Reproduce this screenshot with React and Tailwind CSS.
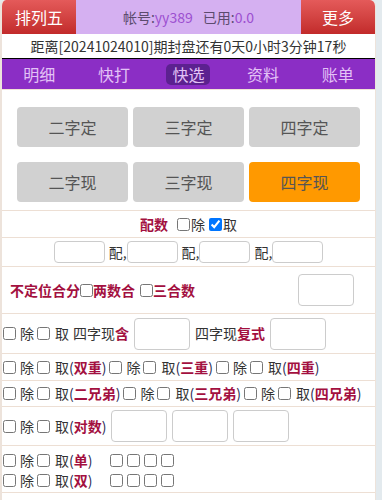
import React from "react";

const RED = "text-[#a3103f] font-bold";

function Cb({ checked = false, className = "" }) {
  return (
    <input
      type="checkbox"
      defaultChecked={checked}
      className={"w-[13px] h-[13px] shrink-0 " + className}
    />
  );
}

function Box({ className = "" }) {
  return (
    <input
      type="text"
      className={"border border-[#cccccc] rounded-[4px] bg-white shrink-0 " + className}
    />
  );
}

function Pair({ label, first = false }) {
  return (
    <>
      <Cb className={first ? "ml-[1px]" : "ml-[3px]"} />
      <span className="ml-[4px]">除</span>
      <Cb className="ml-[3px]" />
      <span className="ml-[5px]">取</span>
      {label ? (
        <span>
          <span className="text-[#2b2b55]">(</span>
          <span className={RED}>{label}</span>
          <span className="text-[#2b2b55]">)</span>
        </span>
      ) : null}
    </>
  );
}

export default function App() {
  const btn =
    "h-[40px] rounded-[4px] flex items-center justify-center text-[16px] text-[#555555]";
  return (
    <div
      className="w-[382px] h-[500px] bg-[#e3eaee] overflow-hidden text-[#333333] text-[14px]"
      style={{ fontFamily: '"Microsoft YaHei", "Noto Sans CJK SC", "Noto Sans", sans-serif' }}
    >
      <div className="w-[376px] h-[500px] bg-white rounded-t-[6px] overflow-hidden border-l-2 border-r border-[#ede3db] flex flex-col">
        {/* header */}
        <div className="flex h-[34px] shrink-0">
          <div className="w-[74px] bg-gradient-to-b from-[#e45a5a] to-[#c22a2a] text-white text-[16px] flex items-center justify-center">
            排列五
          </div>
          <div className="flex-1 bg-[#d5b0f1] flex items-center justify-center text-[14px] text-[#5c4b6e]">
            帐号:<span className="text-[#9c4fd0]">yy389</span>
            <span className="ml-[10px]">已用:</span>
            <span className="text-[#9c4fd0]">0.0</span>
          </div>
          <div className="w-[74px] bg-gradient-to-b from-[#e45a5a] to-[#c22a2a] text-white text-[16px] flex items-center justify-center">
            更多
          </div>
        </div>
        <div className="h-[25px] shrink-0 border-b border-black flex items-center justify-center text-[14px] text-[#333333]">
          距离[20241024010]期封盘还有0天0小时3分钟17秒
        </div>
        <div className="h-[30px] shrink-0 bg-[#8b2ec5] flex items-center text-[16px] text-[#e3c2f6]">
          <div className="flex-1 text-center">明细</div>
          <div className="flex-1 text-center">快打</div>
          <div className="flex-1 flex justify-center">
            <span className="bg-[#5c2190] rounded-[5px] px-[6px] leading-[21px]">快选</span>
          </div>
          <div className="flex-1 text-center">资料</div>
          <div className="flex-1 text-center">账单</div>
        </div>

        {/* buttons */}
        <div className="border-t border-[#f0e2d6] px-[15px] pt-[17px] pb-[8px] grid grid-cols-3 gap-x-[5px] gap-y-[15px]">
          <div className={btn + " bg-[#d1d1d1]"}>二字定</div>
          <div className={btn + " bg-[#d1d1d1]"}>三字定</div>
          <div className={btn + " bg-[#d1d1d1]"}>四字定</div>
          <div className={btn + " bg-[#d1d1d1]"}>二字现</div>
          <div className={btn + " bg-[#d1d1d1]"}>三字现</div>
          <div className={btn + " bg-[#ff9900]"}>四字现</div>
        </div>

        {/* 配数 */}
        <div className="border-t border-[#eddfd4] h-[27px] shrink-0 flex items-center justify-center">
          <span className={RED}>配数</span>
          <Cb className="ml-[9px]" />
          <span className="ml-[1px]">除</span>
          <Cb checked className="ml-[4px]" />
          <span className="ml-[1px]">取</span>
        </div>

        <div className="border-t border-[#eddfd4] h-[29px] shrink-0 flex items-center justify-center">
          <Box className="w-[51px] h-[22px]" />
          <span className="ml-[4px]">配,</span>
          <Box className="w-[51px] h-[22px]" />
          <span className="ml-[4px]">配,</span>
          <Box className="w-[51px] h-[22px]" />
          <span className="ml-[4px]">配,</span>
          <Box className="w-[51px] h-[22px]" />
        </div>

        {/* 不定位合分 */}
        <div className="border-t border-[#eddfd4] h-[47px] shrink-0 flex items-center pl-[8px] pr-[21px]">
          <span className={RED}>不定位合分</span>
          <Cb />
          <span className={RED}>两数合</span>
          <Cb className="ml-[5px]" />
          <span className={RED}>三合数</span>
          <div className="flex-1" />
          <Box className="w-[56px] h-[32px]" />
        </div>

        {/* 四字现含 */}
        <div className="border-t border-[#eddfd4] h-[40px] shrink-0 flex items-center">
          <Pair first />
          <span className="ml-[4px]">四字现</span>
          <span className={RED}>含</span>
          <Box className="ml-[5px] w-[56px] h-[32px]" />
          <span className="ml-[5px]">四字现</span>
          <span className={RED}>复式</span>
          <Box className="ml-[5px] w-[56px] h-[32px]" />
        </div>

        <div className="border-t border-[#eddfd4] h-[27px] shrink-0 flex items-center">
          <Pair first label="双重" />
          <Pair label="三重" />
          <Pair label="四重" />
        </div>

        <div className="border-t border-[#eddfd4] h-[26px] shrink-0 flex items-center">
          <Pair first label="二兄弟" />
          <Pair label="三兄弟" />
          <Pair label="四兄弟" />
        </div>

        <div className="border-t border-[#eddfd4] h-[39px] shrink-0 flex items-center">
          <Pair first label="对数" />
          <Box className="ml-[5px] w-[56px] h-[32px]" />
          <Box className="ml-[5px] w-[56px] h-[32px]" />
          <Box className="ml-[5px] w-[56px] h-[32px]" />
        </div>

        <div className="border-t border-[#eddfd4] pt-[4px] pb-[2px] shrink-0 flex flex-col border-b">
          <div className="h-[20px] flex items-center">
            <Pair first label="单" />
            <div className="ml-[18px] flex gap-[4px]">
              <Cb />
              <Cb />
              <Cb />
              <Cb />
            </div>
          </div>
          <div className="h-[20px] flex items-center">
            <Pair first label="双" />
            <div className="ml-[18px] flex gap-[4px]">
              <Cb />
              <Cb />
              <Cb />
              <Cb />
            </div>
          </div>
        </div>
      </div>
    </div>
  );
}
